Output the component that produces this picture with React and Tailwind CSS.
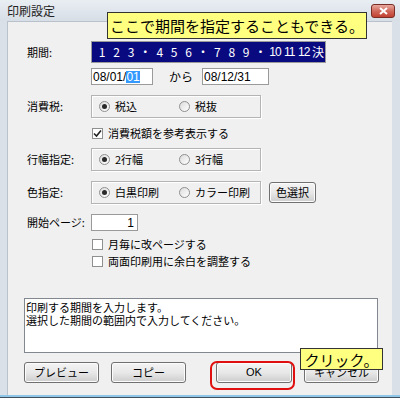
import React from 'react';

const months = ['1', '2', '3', '・', '4', '5', '6', '・', '7', '8', '9', '・', '10', '11', '12', '決'];

function Radio({ checked }) {
    return (
        <span className="w-[11px] h-[11px] rounded-full border border-[#8e8f8f] bg-linear-to-br from-[#dcdcdc] to-white flex items-center justify-center shrink-0">
            {checked && <span className="w-[5px] h-[5px] rounded-full bg-[#2a2a2a]" />}
        </span>
    );
}

function Check({ checked }) {
    return (
        <span className="w-[11px] h-[11px] border border-[#8e8f8f] bg-white flex items-center justify-center shrink-0">
            {checked && (
                <svg width="9" height="9" viewBox="0 0 9 9">
                    <path d="M1 4.5 L3.5 7 L8 1.5" fill="none" stroke="#222" strokeWidth="1.6" />
                </svg>
            )}
        </span>
    );
}

function RadioBox({ first, second }) {
    return (
        <div className="w-[170px] h-[23px] border border-[#b4b4b4] shadow-[inset_1px_1px_0_#fff,1px_1px_0_#fff] flex items-center pl-[7px] whitespace-nowrap">
            <div className="w-[80px] flex items-center gap-[5px]">
                <Radio checked />
                <span>{first}</span>
            </div>
            <div className="flex items-center gap-[5px]">
                <Radio />
                <span>{second}</span>
            </div>
        </div>
    );
}

function Row({ label, children, className }) {
    return (
        <div className={"flex items-center " + (className || '')}>
            <div className="w-[64px] shrink-0 whitespace-nowrap">{label}</div>
            {children}
        </div>
    );
}

function WinButton({ children, className }) {
    return (
        <button className={"h-[21px] rounded-[3px] border border-[#707070] bg-linear-to-b from-[#f4f4f4] via-[#e8e8e8] to-[#cdcdcd] text-[11px] leading-none whitespace-nowrap shadow-[inset_0_0_0_1px_#fcfcfc] " + (className || '')}>
            {children}
        </button>
    );
}

export default function App() {
    return (
        <div className="relative w-[400px] h-[398px] overflow-hidden bg-[#d9e0e8] text-[11px] leading-none text-black font-['Noto_Sans_CJK_JP',sans-serif]">
            {/* title bar */}
            <div className="h-[21px] flex items-center justify-between pl-[7px] pr-[5px] bg-linear-to-b from-[#e9eef3] to-[#d7dee6]">
                <span className="text-[12px] text-[#222]">印刷設定</span>
                <div className="w-[24px] h-[14px] rounded-[3px] border border-[#7a2d24] bg-linear-to-b from-[#e8a89e] via-[#d0685c] to-[#c0402f] flex items-center justify-center mt-[1px]">
                    <svg width="9" height="8" viewBox="0 0 9 8">
                        <path d="M1 1 L8 7 M8 1 L1 7" stroke="#fff" strokeWidth="2" />
                    </svg>
                </div>
            </div>

            {/* client area */}
            <div className="ml-[7px] w-[385px] h-[374px] bg-[#f0f0f0] border-l border-t border-[#b9c2cc] pl-[19px] pt-[19px] flex flex-col">
                <Row label="期間:">
                    <div className="w-[235px] h-[22px] bg-[#0a0a80] border border-[#9a9a9a] flex items-center pl-[3px] overflow-hidden text-white text-[12px]">
                        {months.map((m, i) => (
                            <span key={i} className={"w-[14.4px] shrink-0 text-center " + (m.length > 1 ? "font-['Liberation_Sans',sans-serif] tracking-[-1px]" : '')}>{m}</span>
                        ))}
                    </div>
                </Row>

                <Row label="" className="mt-[5px]">
                    <div className="w-[62px] h-[17px] bg-white border border-[#9a9a9a] flex items-center pl-[1px] text-[12px] font-['Liberation_Sans',sans-serif]">
                        <span>08/01/</span>
                        <span className="bg-[#3399ff] text-white">01</span>
                    </div>
                    <span className="ml-[16px] w-[33px] text-[12px]">から</span>
                    <div className="w-[67px] h-[17px] bg-white border border-[#9a9a9a] flex items-center pl-[1px] text-[12px] font-['Liberation_Sans',sans-serif]">
                        08/12/31
                    </div>
                </Row>

                <Row label="消費税:" className="mt-[10px]">
                    <RadioBox first="税込" second="税抜" />
                </Row>

                <Row label="" className="mt-[10px]">
                    <div className="flex items-center gap-[5px] ml-[1px]">
                        <Check checked />
                        <span>消費税額を参考表示する</span>
                    </div>
                </Row>

                <Row label="行幅指定:" className="mt-[9px]">
                    <RadioBox first="2行幅" second="3行幅" />
                </Row>

                <Row label="色指定:" className="mt-[10px]">
                    <RadioBox first="白黒印刷" second="カラー印刷" />
                    <WinButton className="ml-[8px] w-[47px]">色選択</WinButton>
                </Row>

                <Row label="開始ページ:" className="mt-[10px]">
                    <div className="w-[47px] h-[17px] bg-white border border-[#9a9a9a] flex items-center justify-end pr-[3px] text-[12px] font-['Liberation_Sans',sans-serif]">
                        1
                    </div>
                </Row>

                <Row label="" className="mt-[8px]">
                    <div className="flex items-center gap-[5px] ml-[1px]">
                        <Check />
                        <span>月毎に改ページする</span>
                    </div>
                </Row>

                <Row label="" className="mt-[6px]">
                    <div className="flex items-center gap-[5px] ml-[1px]">
                        <Check />
                        <span>両面印刷用に余白を調整する</span>
                    </div>
                </Row>

                <div className="-ml-[3px] mt-[31px] w-[354px] h-[55px] bg-white border border-[#828790] pl-[1px] pt-[2px] leading-[13px]">
                    <p>印刷する期間を入力します。</p>
                    <p>選択した期間の範囲内で入力してください。</p>
                </div>

                <div className="-ml-[3px] mt-[9px] flex">
                    <WinButton className="w-[75px]">プレビュー</WinButton>
                    <WinButton className="ml-[12px] w-[75px]">コピー</WinButton>
                    <WinButton className="ml-[30px] w-[76px] font-['Liberation_Sans',sans-serif]">OK</WinButton>
                    <WinButton className="ml-[12px] w-[75px]">キャンセル</WinButton>
                </div>
            </div>

            {/* bottom edge */}
            <div className="absolute left-0 right-0 bottom-0 h-[3px] bg-[#8fc6e8] border-b border-[#40505f]" />

            {/* callouts */}
            <div className="absolute left-[107px] top-[12px] w-[260px] h-[27px] bg-[#ffff80] border border-[#333] flex items-center justify-center text-[15px]">
                ここで期間を指定することもできる。
            </div>
            <div className="absolute left-[210px] top-[361px] w-[85px] h-[29px] rounded-[7px] border-2 border-[#e01010]" />
            <div className="absolute left-[300px] top-[348px] w-[83px] h-[22px] bg-[#ffff80] border border-[#333] flex items-center justify-center text-[15px]">
                クリック。
            </div>
        </div>
    );
}
